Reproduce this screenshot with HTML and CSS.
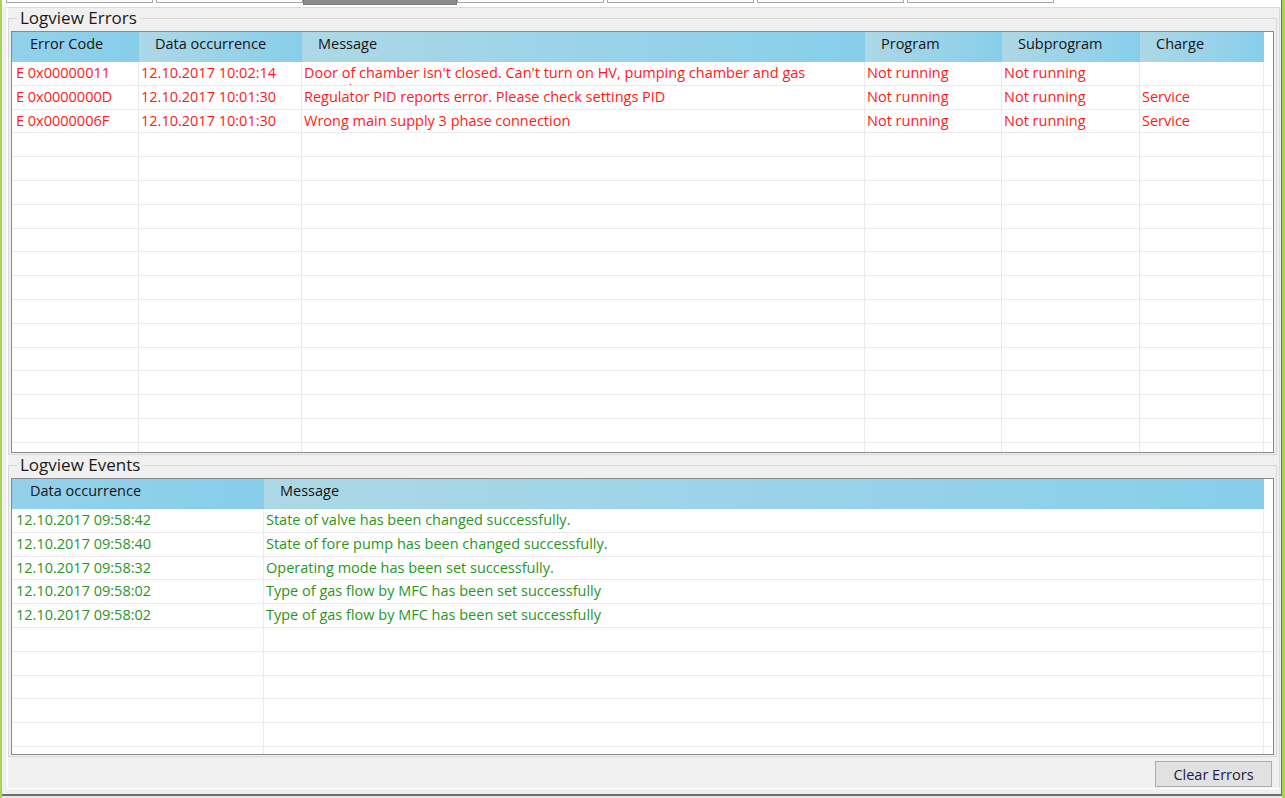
FILE: index.html
```html
<!DOCTYPE html>
<html>
<head>
<meta charset="utf-8">
<title>Logview</title>
<link rel="stylesheet" href="styles.css">
</head>
<body>
<div class="window">
  <div class="frame">
    <div class="tabstrip">
      <div class="tab"></div>
      <div class="tab"></div>
      <div class="tab sel"></div>
      <div class="tab"></div>
      <div class="tab"></div>
      <div class="tab"></div>
      <div class="tab"></div>
    </div>
    <div class="page">
      <fieldset class="group">
        <legend>Logview Errors</legend>
        <div class="grid grid-errors errors">
          <div class="head">
            <div class="hc first">Error Code</div>
            <div class="hc">Data occurrence</div>
            <div class="hc">Message</div>
            <div class="hc">Program</div>
            <div class="hc">Subprogram</div>
            <div class="hc">Charge</div>
            <div class="hfill"></div>
          </div>
          <div class="row err">
            <div class="c first">E 0x00000011</div>
            <div class="c">12.10.2017 10:02:14</div>
            <div class="c">Door of chamber isn't closed. Can't turn on HV, pumping chamber and gas<br>control</div>
            <div class="c">Not running</div>
            <div class="c">Not running</div>
            <div class="c"></div>
            <div class="c fillc"></div>
          </div>
          <div class="row err">
            <div class="c first">E 0x0000000D</div>
            <div class="c">12.10.2017 10:01:30</div>
            <div class="c">Regulator PID reports error. Please check settings PID</div>
            <div class="c">Not running</div>
            <div class="c">Not running</div>
            <div class="c">Service</div>
            <div class="c fillc"></div>
          </div>
          <div class="row err">
            <div class="c first">E 0x0000006F</div>
            <div class="c">12.10.2017 10:01:30</div>
            <div class="c">Wrong main supply 3 phase connection</div>
            <div class="c">Not running</div>
            <div class="c">Not running</div>
            <div class="c">Service</div>
            <div class="c fillc"></div>
          </div>
          <div class="row"><div class="c"></div><div class="c"></div><div class="c"></div><div class="c"></div><div class="c"></div><div class="c"></div><div class="c fillc"></div></div>
          <div class="row"><div class="c"></div><div class="c"></div><div class="c"></div><div class="c"></div><div class="c"></div><div class="c"></div><div class="c fillc"></div></div>
          <div class="row"><div class="c"></div><div class="c"></div><div class="c"></div><div class="c"></div><div class="c"></div><div class="c"></div><div class="c fillc"></div></div>
          <div class="row"><div class="c"></div><div class="c"></div><div class="c"></div><div class="c"></div><div class="c"></div><div class="c"></div><div class="c fillc"></div></div>
          <div class="row"><div class="c"></div><div class="c"></div><div class="c"></div><div class="c"></div><div class="c"></div><div class="c"></div><div class="c fillc"></div></div>
          <div class="row"><div class="c"></div><div class="c"></div><div class="c"></div><div class="c"></div><div class="c"></div><div class="c"></div><div class="c fillc"></div></div>
          <div class="row"><div class="c"></div><div class="c"></div><div class="c"></div><div class="c"></div><div class="c"></div><div class="c"></div><div class="c fillc"></div></div>
          <div class="row"><div class="c"></div><div class="c"></div><div class="c"></div><div class="c"></div><div class="c"></div><div class="c"></div><div class="c fillc"></div></div>
          <div class="row"><div class="c"></div><div class="c"></div><div class="c"></div><div class="c"></div><div class="c"></div><div class="c"></div><div class="c fillc"></div></div>
          <div class="row"><div class="c"></div><div class="c"></div><div class="c"></div><div class="c"></div><div class="c"></div><div class="c"></div><div class="c fillc"></div></div>
          <div class="row"><div class="c"></div><div class="c"></div><div class="c"></div><div class="c"></div><div class="c"></div><div class="c"></div><div class="c fillc"></div></div>
          <div class="row"><div class="c"></div><div class="c"></div><div class="c"></div><div class="c"></div><div class="c"></div><div class="c"></div><div class="c fillc"></div></div>
          <div class="row"><div class="c"></div><div class="c"></div><div class="c"></div><div class="c"></div><div class="c"></div><div class="c"></div><div class="c fillc"></div></div>
          <div class="row"><div class="c"></div><div class="c"></div><div class="c"></div><div class="c"></div><div class="c"></div><div class="c"></div><div class="c fillc"></div></div>
        </div>
      </fieldset>
      <fieldset class="group">
        <legend>Logview Events</legend>
        <div class="grid grid-events events">
          <div class="head">
            <div class="hc first">Data occurrence</div>
            <div class="hc">Message</div>
            <div class="hfill"></div>
          </div>
          <div class="row evt"><div class="c first">12.10.2017 09:58:42</div><div class="c">State of valve has been changed successfully.</div><div class="c fillc"></div></div>
          <div class="row evt"><div class="c first">12.10.2017 09:58:40</div><div class="c">State of fore pump has been changed successfully.</div><div class="c fillc"></div></div>
          <div class="row evt"><div class="c first">12.10.2017 09:58:32</div><div class="c">Operating mode has been set successfully.</div><div class="c fillc"></div></div>
          <div class="row evt"><div class="c first">12.10.2017 09:58:02</div><div class="c">Type of gas flow by MFC has been set successfully</div><div class="c fillc"></div></div>
          <div class="row evt"><div class="c first">12.10.2017 09:58:02</div><div class="c">Type of gas flow by MFC has been set successfully</div><div class="c fillc"></div></div>
          <div class="row"><div class="c"></div><div class="c"></div><div class="c fillc"></div></div>
          <div class="row"><div class="c"></div><div class="c"></div><div class="c fillc"></div></div>
          <div class="row"><div class="c"></div><div class="c"></div><div class="c fillc"></div></div>
          <div class="row"><div class="c"></div><div class="c"></div><div class="c fillc"></div></div>
          <div class="row"><div class="c"></div><div class="c"></div><div class="c fillc"></div></div>
          <div class="row"><div class="c"></div><div class="c"></div><div class="c fillc"></div></div>
        </div>
      </fieldset>
      <div class="actions">
        <button class="btn" type="button">Clear Errors</button>
      </div>
    </div>
  </div>
</div>
</body>
</html>
```
FILE: styles.css
```css
* { box-sizing: border-box; }
html, body { margin: 0; padding: 0; }
body {
  width: 1285px;
  height: 798px;
  overflow: hidden;
  font-family: "Open Sans", "Noto Sans", sans-serif;
  background: #e8e8e8;
}
.window {
  width: 1285px;
  height: 798px;
  border-left: 2px solid #a6d35a;
  border-right: 3px solid #a6d35a;
  padding-bottom: 2px;
  background: #e8e8e8;
  display: flex;
  flex-direction: column;
}
.frame {
  flex: 1;
  display: flex;
  flex-direction: column;
  background: #f0f0f0;
  border-right: 1px solid #6f6f6f;
  border-bottom: 2px solid #6f6f6f;
}
.tabstrip {
  flex: none;
  height: 7px;
  background: #fff;
  display: flex;
  align-items: flex-start;
  gap: 3px;
  padding-left: 4px;
}
.tab {
  width: 147px;
  height: 3px;
  background: #fcfcfc;
  border: 1px solid #a9a9a9;
  border-top: 0;
}
.tab.sel {
  width: 154px;
  height: 5px;
  margin: 0 -3px;
  background: #8b8b8b;
  border-color: #7a7a7a;
}
.page {
  flex: 1;
  margin: 0 1px 5px 5px;
  border: 1px solid #dadada;
  border-left-color: #fff;
  border-bottom-color: #fff;
  padding: 0 2px 0 0;
  display: flex;
  flex-direction: column;
}
.group {
  flex: none;
  margin: 0;
  padding: 0 2px 1px;
  border: 1px solid #d8d8d8;
  min-width: 0;
}
.group legend {
  margin-left: 6px;
  padding: 0 3px;
  font-size: 17px;
  line-height: 20px;
  color: #1a1a1a;
}
.grid {
  margin-top: 3px;
  border: 1px solid #8a8a8a;
  background: #fff;
  overflow: hidden;
}
.grid-errors { height: 422px; }
.grid-events { height: 277px; }
.head {
  display: grid;
  height: 30px;
}
.errors .head, .errors .row {
  grid-template-columns: 127px 163px 563px 137px 138px 124px 1fr;
}
.events .head, .events .row {
  grid-template-columns: 252px 1000px 1fr;
}
.hc {
  padding: 2px 0 0 16px;
  font-size: 14.5px;
  line-height: 20px;
  color: #141414;
  white-space: nowrap;
  overflow: hidden;
  background: linear-gradient(to right, #add8e6, #87ceeb);
}
.hc.first {
  padding-left: 18px;
  background: linear-gradient(to right, #93d1ea, #87ceeb);
}
.hfill { background: #fff; }
.row {
  display: grid;
  height: 23.8px;
  border-bottom: 1px solid #ebebeb;
}
.c {
  border-right: 1px solid #ebebeb;
  padding: 2px 0 0 2px;
  font-size: 14.5px;
  line-height: 17px;
  white-space: nowrap;
  overflow: hidden;
}
.c.first { padding-left: 4px; }
.c.fillc { border-right: 0; }
.err .c { color: #ff1a1a; }
.evt .c { color: #2a961e; }
.actions {
  flex: 1;
  display: flex;
  justify-content: flex-end;
  align-items: flex-end;
  padding: 0 5px 1px 0;
}
.btn {
  width: 117px;
  height: 26px;
  padding: 0;
  background: #e1e1e1;
  border: 1px solid #adadad;
  font-family: "Open Sans", "Noto Sans", sans-serif;
  font-size: 14.5px;
  color: #1b1b3f;
}
```
